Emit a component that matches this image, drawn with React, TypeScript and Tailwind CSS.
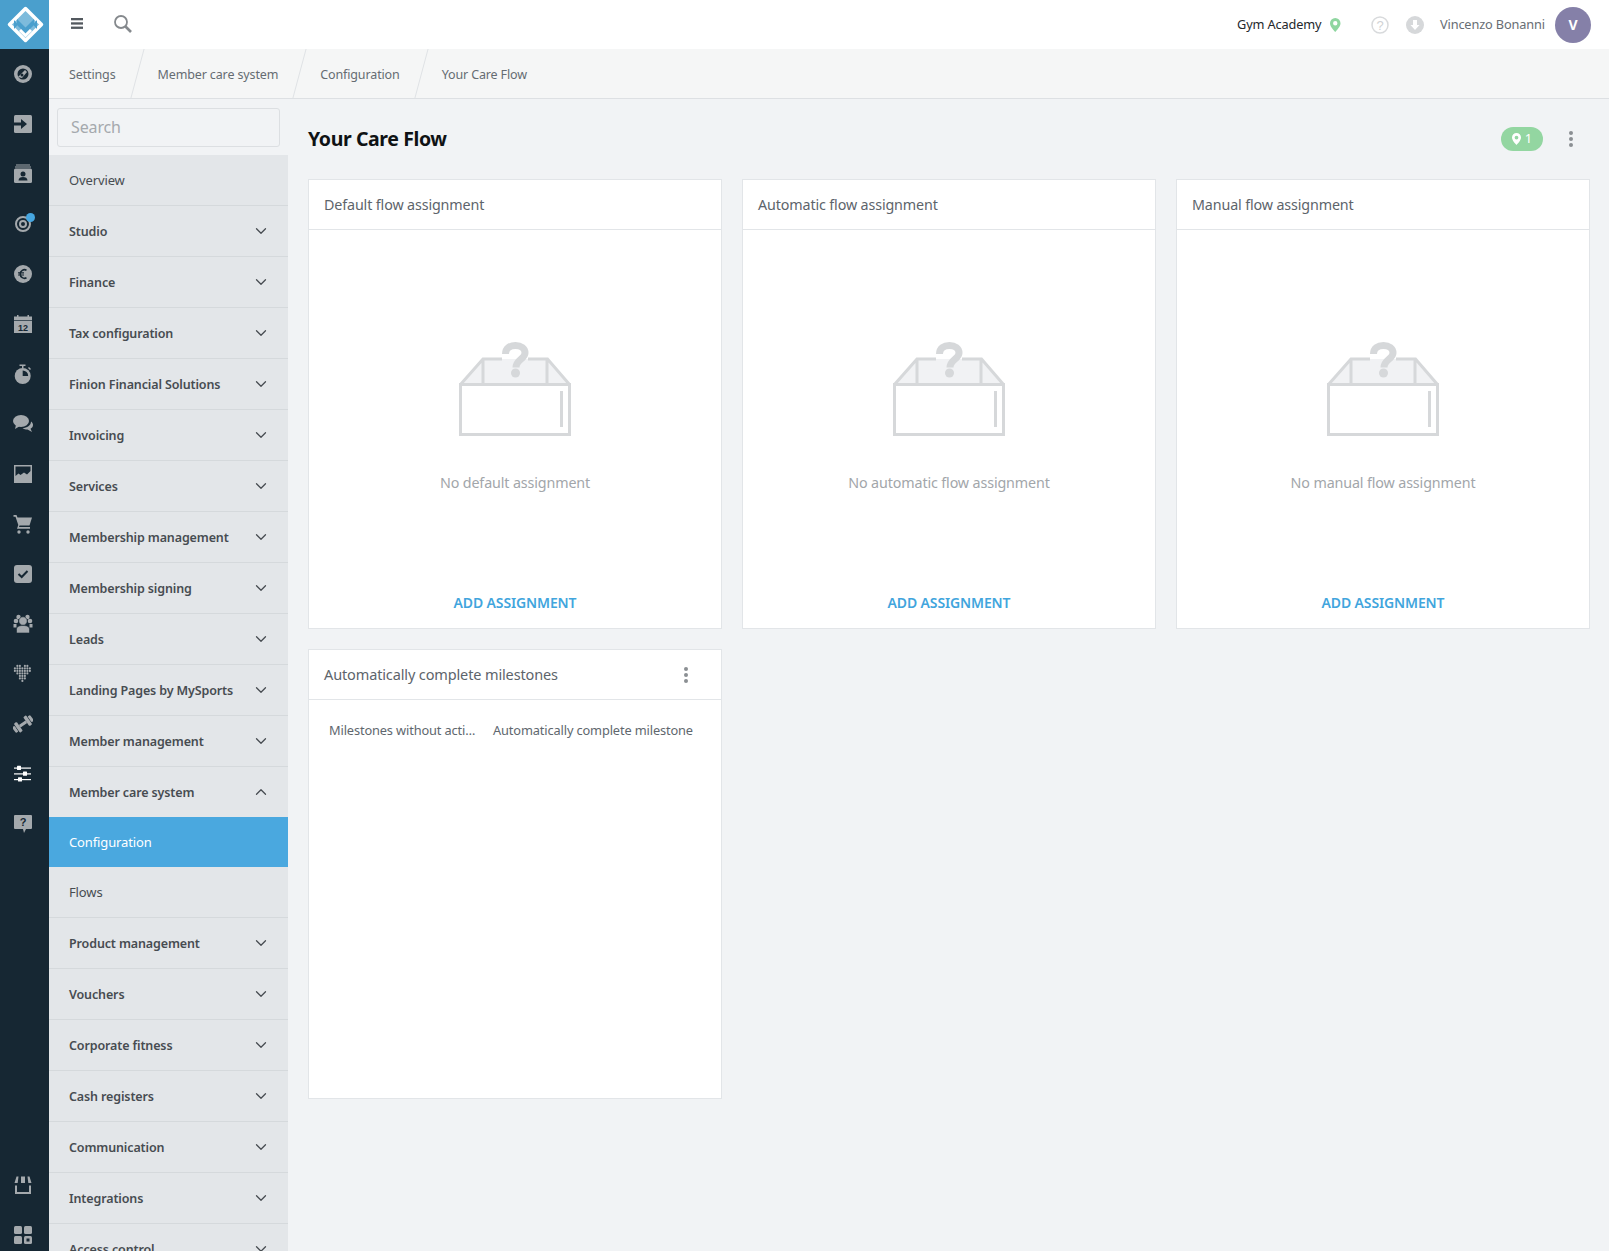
import { ChevronDown, ChevronUp } from 'lucide-react'

const menuItems = [
  'Studio',
  'Finance',
  'Tax configuration',
  'Finion Financial Solutions',
  'Invoicing',
  'Services',
  'Membership management',
  'Membership signing',
  'Leads',
  'Landing Pages by MySports',
  'Member management',
]

const menuItemsAfter = [
  'Product management',
  'Vouchers',
  'Corporate fitness',
  'Cash registers',
  'Communication',
  'Integrations',
  'Access control',
]

const breadcrumbs = ['Settings', 'Member care system', 'Configuration', 'Your Care Flow']

function RailIcon({ children }: { children: React.ReactNode }) {
  return <div className="h-[50px] flex items-center justify-center shrink-0 pr-[3px]">{children}</div>
}

function Logo() {
  return (
    <svg width="49" height="49" viewBox="0 0 49 49">
      <path d="M25.500 8.500 41.500 24.500 25.500 40.500 9.500 24.500Z" fill="#7dbbdc" stroke="#fff" strokeWidth="3.500" strokeLinejoin="round" />
      <path d="M14 20v9l4-4.500ZM37 20v9l-4-4.500Z" fill="#4a9fcd" />
      <path d="M17 19l8.500 8.500L34 19v6l-8.500 8.500L17 25Z" fill="#4a9fcd" />
      <path d="M20 30l5.500 5.500L31 30" fill="none" stroke="#fff" strokeWidth="3" />
    </svg>
  )
}

const gray = '#a4a9ad'
const dark = '#162733'

function Gauge() {
  return (
    <svg width="20" height="20" viewBox="0 0 20 20">
      <circle cx="10" cy="10" r="9" fill={gray} />
      <circle cx="10" cy="10" r="5.500" fill={dark} />
      <path d="M5 13 12 6l2 2-5 6Z" fill={gray} />
      <circle cx="9" cy="11" r="1.500" fill={dark} />
    </svg>
  )
}

function LoginBox() {
  return (
    <svg width="20" height="20" viewBox="0 0 20 20">
      <rect x="1" y="1" width="18" height="18" rx="1.500" fill={gray} />
      <path d="M1 8.500h7V5l6 5-6 5v-3.500H1Z" fill={dark} />
    </svg>
  )
}

function ContactCard() {
  return (
    <svg width="20" height="20" viewBox="0 0 20 20">
      <rect x="3" y="0.500" width="14" height="1" fill={gray} />
      <rect x="2" y="2.500" width="16" height="1" fill={gray} />
      <rect x="1" y="4.500" width="18" height="14.500" rx="1.500" fill={gray} />
      <circle cx="10" cy="10" r="2.500" fill={dark} />
      <path d="M5.500 16.500c0-2.500 2-3.500 4.500-3.500s4.500 1 4.500 3.500Z" fill={dark} />
    </svg>
  )
}

function Target() {
  return (
    <div className="relative">
      <svg width="20" height="20" viewBox="0 0 20 20">
        <circle cx="10" cy="10" r="7" fill="none" stroke={gray} strokeWidth="2" />
        <circle cx="10" cy="10" r="3" fill="none" stroke={gray} strokeWidth="2" />
      </svg>
      <div className="absolute -top-px -right-[2px] size-[9px] rounded-full bg-[#46a6e0]" />
    </div>
  )
}

function Euro() {
  return (
    <svg width="20" height="20" viewBox="0 0 20 20">
      <circle cx="10" cy="10" r="9" fill={gray} />
      <path d="M13.500 6.200A4.300 4.300 0 0 0 7.200 10a4.300 4.300 0 0 0 6.300 3.800" fill="none" stroke={dark} strokeWidth="1.600" />
      <path d="M5 8.800h6M5 11h6" stroke={dark} strokeWidth="1.200" />
    </svg>
  )
}

function CalendarDay() {
  return (
    <svg width="20" height="20" viewBox="0 0 20 20">
      <path d="M1 2.500h3V1h1.500v1.500h9V1H16v1.500h3V19H1Z" fill={gray} />
      <path d="M1 6.500h18" stroke={dark} strokeWidth="0.700" />
      <text x="10" y="16.500" textAnchor="middle" fontSize="9" fontWeight="700" fontFamily="Liberation Sans, sans-serif" fill={dark}>
        12
      </text>
    </svg>
  )
}

function Stopwatch() {
  return (
    <svg width="20" height="20" viewBox="0 0 20 20">
      <rect x="6.500" y="0.500" width="6" height="1.500" fill={gray} />
      <rect x="9" y="2" width="1.500" height="2" fill={gray} />
      <path d="m15.500 3.500 2 2" stroke={gray} strokeWidth="1.500" />
      <circle cx="9.700" cy="12" r="8" fill={gray} />
      <path d="M9.700 12V6.500a5.500 5.500 0 0 1 5.500 5.500Z" fill={dark} />
    </svg>
  )
}

function Chat() {
  return (
    <svg width="20" height="20" viewBox="0 0 20 20">
      <ellipse cx="8" cy="7" rx="8" ry="6" fill={gray} />
      <path d="M3 11 2 15l5-3Z" fill={gray} />
      <path d="M18 7.500c1.500 1 2 2.200 2 3.500 0 1.800-1 3-2.500 3.800L19 18l-4.500-2.500c-2 0-3.500-.5-5-1.500 4.500 0 8.500-2.500 8.500-6.500Z" fill={gray} />
    </svg>
  )
}

function ImageChart() {
  return (
    <svg width="20" height="20" viewBox="0 0 20 20">
      <rect x="1" y="1" width="18" height="18" fill={gray} />
      <path d="M2.500 2.500h15v4.500l-3.500 3.500-3-2-3.500 2.500-2-1.500-3 2.500Z" fill={dark} />
    </svg>
  )
}

function Cart() {
  return (
    <svg width="20" height="20" viewBox="0 0 20 20">
      <path d="M0.500 1h3l1 2.500H19l-2.500 8H6.500l-.5 1.500h11v1.800H4l1.300-3.800L2.500 2.800H.5Z" fill={gray} />
      <circle cx="6" cy="18" r="1.700" fill={gray} />
      <circle cx="15" cy="18" r="1.700" fill={gray} />
    </svg>
  )
}

function CheckBox() {
  return (
    <svg width="20" height="20" viewBox="0 0 20 20">
      <rect x="1" y="1" width="18" height="18" rx="3" fill={gray} />
      <path d="m5.500 10 3.200 3L14.500 7" fill="none" stroke={dark} strokeWidth="2" />
    </svg>
  )
}

function Group() {
  return (
    <svg width="20" height="20" viewBox="0 0 20 20">
      <circle cx="3" cy="7" r="2.300" fill={gray} />
      <circle cx="17" cy="7" r="2.300" fill={gray} />
      <circle cx="5.500" cy="3" r="2.200" fill={gray} />
      <circle cx="14.500" cy="3" r="2.200" fill={gray} />
      <circle cx="10" cy="7" r="4.200" fill={gray} stroke={dark} strokeWidth="0.600" />
      <path d="M3.500 19v-3.500c0-3 2.500-4 6.500-4s6.500 1 6.500 4V19Z" fill={gray} stroke={dark} strokeWidth="0.600" />
      <path d="M0.500 10h3v3.500h-3ZM16.500 10h3v3.500h-3Z" fill={gray} />
    </svg>
  )
}

function HeartDots() {
  const rows = [
    [2, 4, 8, 10],
    [0, 2, 4, 6, 8, 10, 12],
    [0, 2, 4, 6, 8, 10, 12],
    [2, 4, 6, 8, 10],
    [4, 6, 8],
    [4, 6, 8],
    [6],
  ]
  return (
    <svg width="20" height="20" viewBox="-1 -1 16 16">
      {rows.map((row, y) =>
        row.map((x) => <circle key={`${x}-${y}`} cx={x + 0.500} cy={y * 2 + 0.500} r="0.850" fill={gray} />),
      )}
    </svg>
  )
}

function Dumbbell() {
  return (
    <svg width="20" height="20" viewBox="0 0 20 20">
      <g transform="rotate(-35 10 10)">
        <rect x="-1" y="6.500" width="3" height="7" rx="1" fill={gray} />
        <rect x="2.500" y="4.500" width="3.500" height="11" rx="1" fill={gray} />
        <rect x="6" y="8.500" width="8" height="3" fill={gray} />
        <rect x="14" y="4.500" width="3.500" height="11" rx="1" fill={gray} />
        <rect x="18" y="6.500" width="3" height="7" rx="1" fill={gray} />
      </g>
    </svg>
  )
}

function Sliders() {
  return (
    <svg width="20" height="20" viewBox="0 0 20 20" fill="#fff">
      <rect x="1" y="3.500" width="17" height="1.200" />
      <rect x="4" y="1.800" width="4" height="4.200" rx="0.500" />
      <rect x="1" y="9.300" width="17" height="1.200" />
      <rect x="10" y="7.600" width="4" height="4.200" rx="0.500" />
      <rect x="1" y="15" width="17" height="1.200" />
      <rect x="5" y="13.300" width="4" height="4.200" rx="0.500" />
    </svg>
  )
}

function HelpBubble() {
  return (
    <svg width="20" height="20" viewBox="0 0 20 20">
      <path d="M2 1h16a1 1 0 0 1 1 1v12a1 1 0 0 1-1 1h-5l-2 4-1-4H2a1 1 0 0 1-1-1V2a1 1 0 0 1 1-1Z" fill={gray} />
      <text x="10" y="12" textAnchor="middle" fontSize="11" fontWeight="700" fontFamily="Liberation Sans, sans-serif" fill={dark}>
        ?
      </text>
    </svg>
  )
}

function Shop() {
  return (
    <svg width="20" height="20" viewBox="0 0 20 20">
      <path d="M2 10.500h2V17h12v-6.500h2V19H2Z" fill={gray} />
      <path d="M3.500 1.500h2l-.8 6.500H1.500ZM8 1.500h4V8H8ZM14.500 1.500h2L18.500 8h-3.200Z" fill={gray} />
    </svg>
  )
}

function Apps() {
  return (
    <svg width="20" height="20" viewBox="0 0 20 20">
      <rect x="1" y="1" width="8" height="8" rx="1.500" fill={gray} />
      <rect x="11" y="1" width="8" height="8" rx="1.500" fill={gray} />
      <rect x="1" y="11" width="8" height="8" rx="1.500" fill={gray} />
      <rect x="11" y="11" width="8" height="8" rx="1.500" fill={gray} />
      <rect x="13.500" y="13.500" width="3" height="3" fill={dark} />
    </svg>
  )
}

function Pin({ color, size }: { color: string; size: number }) {
  return (
    <svg width={size * 0.75} height={size} viewBox="0 0 12 16">
      <path
        fillRule="evenodd"
        d="M6 0a6 6 0 0 1 6 6c0 3.500-4 8-6 10-2-2-6-6.500-6-10a6 6 0 0 1 6-6Zm0 3.500a2.500 2.500 0 1 0 0 5 2.500 2.500 0 0 0 0-5Z"
        fill={color}
      />
    </svg>
  )
}

function Kebab() {
  return (
    <div className="flex flex-col gap-[2px]">
      <span className="size-[4px] rounded-full bg-[#8b8f93]" />
      <span className="size-[4px] rounded-full bg-[#8b8f93]" />
      <span className="size-[4px] rounded-full bg-[#8b8f93]" />
    </div>
  )
}

function EmptyBox() {
  return (
    <svg width="112" height="94" viewBox="0 0 112 94" fill="none" stroke="#d6d8da" strokeWidth="3">
      <path d="M24.500 17h63l22 25H2.500Z" fill="#f1f2f4" stroke="none" />
      <rect x="1.500" y="42.500" width="109" height="50" fill="#fff" />
      <path d="M1.500 42.500 24 17H43M69 17h19.500l22 25.500M24 17v25.500M88 17v25.500" />
      <path d="M102.500 49v36" />
      <path d="M46.500 12C46.500 6 51 3.500 56.500 3.500S66 6.500 66 11c0 6-9 6.500-9 14.500" strokeWidth="7" />
      <circle cx="56.500" cy="31" r="4.500" fill="#d6d8da" stroke="none" />
    </svg>
  )
}

function MenuRow({ label }: { label: string }) {
  return (
    <div className="h-[51px] shrink-0 flex items-center justify-between pl-5 pr-[18px] border-b border-[#d5d9dc] text-[12.500px] text-[#474c51] font-semibold">
      <span className="mt-[2px]">{label}</span>
      <ChevronDown className="size-[18px] text-[#474c51]" strokeWidth={1.7} />
    </div>
  )
}

function AssignmentCard({ title, empty }: { title: string; empty: string }) {
  return (
    <div className="h-[450px] bg-white border border-[#e2e5e8] flex flex-col items-stretch">
      <div className="h-[50px] shrink-0 flex items-center px-[15px] border-b border-[#e2e5e8] text-[14.300px] text-[#5d646b]">
        {title}
      </div>
      <div className="flex-1 flex flex-col items-center pt-[112px] pb-[15px]">
        <EmptyBox />
        <div className="mt-[36px] text-[14.300px] text-[#a2a6aa]">{empty}</div>
        <div className="mt-auto text-[14px] font-semibold text-[#41a5dd]">ADD ASSIGNMENT</div>
      </div>
    </div>
  )
}

export default function App() {
  return (
    <div className="h-screen w-full flex overflow-hidden bg-[#f1f3f5] text-[13px] tracking-[-0.01em] font-['Noto_Sans','Lato',sans-serif]">
      {/* Icon rail */}
      <div className="w-[49px] shrink-0 bg-[#162733] flex flex-col">
        <div className="h-[49px] shrink-0 bg-[#4a9fcd]">
          <Logo />
        </div>
        <RailIcon><Gauge /></RailIcon>
        <RailIcon><LoginBox /></RailIcon>
        <RailIcon><ContactCard /></RailIcon>
        <RailIcon><Target /></RailIcon>
        <RailIcon><Euro /></RailIcon>
        <RailIcon><CalendarDay /></RailIcon>
        <RailIcon><Stopwatch /></RailIcon>
        <RailIcon><Chat /></RailIcon>
        <RailIcon><ImageChart /></RailIcon>
        <RailIcon><Cart /></RailIcon>
        <RailIcon><CheckBox /></RailIcon>
        <RailIcon><Group /></RailIcon>
        <RailIcon><HeartDots /></RailIcon>
        <RailIcon><Dumbbell /></RailIcon>
        <RailIcon><Sliders /></RailIcon>
        <RailIcon><HelpBubble /></RailIcon>
        <div className="mt-[311px]">
          <RailIcon><Shop /></RailIcon>
          <RailIcon><Apps /></RailIcon>
        </div>
      </div>

      <div className="flex-1 min-w-0 flex flex-col">
        {/* Top bar */}
        <div className="h-[49px] shrink-0 bg-white flex items-center pl-[22px] pr-[18px]">
          <svg className="-mt-[2px]" width="12" height="11" viewBox="0 0 12 11" fill="#53595f">
            <rect width="12" height="2.300" />
            <rect y="4.300" width="12" height="2.300" />
            <rect y="8.600" width="12" height="2.300" />
          </svg>
          <svg className="ml-[31px] -mt-[2px]" width="18" height="18" viewBox="0 0 18 18" fill="none" stroke="#85898d">
            <circle cx="7" cy="7" r="6" strokeWidth="1.800" />
            <path d="m11.500 11.500 5.500 5.500" strokeWidth="2.600" />
          </svg>
          <div className="ml-auto flex items-center text-[12.750px]">
            <span className="text-[#24282c]">Gym Academy</span>
            <span className="ml-[9px] mr-[-1px]"><Pin color="#8fd6a0" size={14} /></span>
            <svg className="ml-[31px]" width="18" height="18" viewBox="0 0 18 18" fill="none">
              <circle cx="9" cy="9" r="8" stroke="#d8dadc" strokeWidth="1.500" />
              <text x="9" y="13.500" textAnchor="middle" fontSize="13" fontFamily="Liberation Sans, sans-serif" fill="#d0d2d4">
                ?
              </text>
            </svg>
            <svg className="ml-[17px]" width="18" height="18" viewBox="0 0 18 18">
              <circle cx="9" cy="9" r="9" fill="#d6d8da" />
              <path d="M7 4h4v5h2.500L9 14 4.500 9H7Z" fill="#fff" />
            </svg>
            <span className="ml-[16px] text-[#686e74]">Vincenzo Bonanni</span>
            <div className="ml-[10px] size-[36px] rounded-full bg-[#8580a8] flex items-center justify-center text-[14px] text-white font-bold">
              V
            </div>
          </div>
        </div>

        {/* Breadcrumbs */}
        <div className="h-[50px] shrink-0 bg-[#f5f6f6] border-b border-[#dde0e3] flex items-stretch overflow-hidden">
          {breadcrumbs.map((crumb, i) => (
            <div key={crumb} className="flex items-stretch">
              {i > 0 && <div className="w-px bg-[#dfe2e5] -skew-x-[15deg]" />}
              <div className="flex items-center pl-5 pr-[21px] pt-[4px] text-[12.500px] text-[#656c72]">{crumb}</div>
            </div>
          ))}
        </div>

        <div className="flex-1 min-h-0 flex">
          {/* Settings menu */}
          <div className="w-[239px] shrink-0 flex flex-col overflow-hidden">
            <div className="pl-2 pr-2 pt-[9px] pb-2">
              <input
                placeholder="Search"
                className="w-full h-[39px] px-[13px] pb-[2px] bg-[#f1f3f5] border border-[#dcdfe2] rounded-[3px] text-[16px] placeholder:text-[#a5a9ad] outline-none"
              />
            </div>
            <div className="bg-[#e3e6e9] flex flex-col">
              <div className="h-[51px] shrink-0 flex items-center pl-5 border-b border-[#d5d9dc] text-[#474c51]">
                <span className="mt-[2px]">Overview</span>
              </div>
              {menuItems.map((item) => (
                <MenuRow key={item} label={item} />
              ))}
              <div className="h-[50px] shrink-0 flex items-center justify-between pl-5 pr-[18px] text-[12.500px] text-[#474c51] font-semibold">
                <span className="mt-[2px]">Member care system</span>
                <ChevronUp className="size-[18px]" strokeWidth={1.7} />
              </div>
              <div className="h-[50px] shrink-0 flex items-center pl-5 bg-[#4aa8df] text-white">
                <span className="mt-[2px]">Configuration</span>
              </div>
              <div className="h-[51px] shrink-0 flex items-center pl-5 border-b border-[#d5d9dc] text-[#474c51]">
                <span className="mt-[2px]">Flows</span>
              </div>
              {menuItemsAfter.map((item) => (
                <MenuRow key={item} label={item} />
              ))}
            </div>
          </div>

          {/* Main content */}
          <div className="flex-1 min-w-0 pl-5 pr-[19px]">
            <div className="h-[80px] flex items-center justify-between">
              <h1 className="text-[19.500px] font-bold tracking-[-0.02em] text-[#0f1214]">Your Care Flow</h1>
              <div className="flex items-center">
                <div className="w-[42px] h-[24px] rounded-full bg-[#93d6a1] flex items-center justify-center gap-[4px] text-white">
                  <Pin color="#fff" size={12} />
                  <span>1</span>
                </div>
                <div className="ml-[26px] mr-[17px]">
                  <Kebab />
                </div>
              </div>
            </div>
            <div className="grid grid-cols-3 gap-5">
              <AssignmentCard title="Default flow assignment" empty="No default assignment" />
              <AssignmentCard title="Automatic flow assignment" empty="No automatic flow assignment" />
              <AssignmentCard title="Manual flow assignment" empty="No manual flow assignment" />
              <div className="h-[450px] bg-white border border-[#e2e5e8]">
                <div className="h-[50px] flex items-center justify-between pl-[15px] pr-[33px] border-b border-[#e2e5e8] text-[14.500px] text-[#5d646b]">
                  <span>Automatically complete milestones</span>
                  <Kebab />
                </div>
                <div className="flex items-center pt-[21px] pl-5 text-[12.800px] text-[#60676e] whitespace-nowrap">
                  <span className="w-[164px] shrink-0">Milestones without acti…</span>
                  <span>Automatically complete milestone</span>
                </div>
              </div>
            </div>
          </div>
        </div>
      </div>
    </div>
  )
}
